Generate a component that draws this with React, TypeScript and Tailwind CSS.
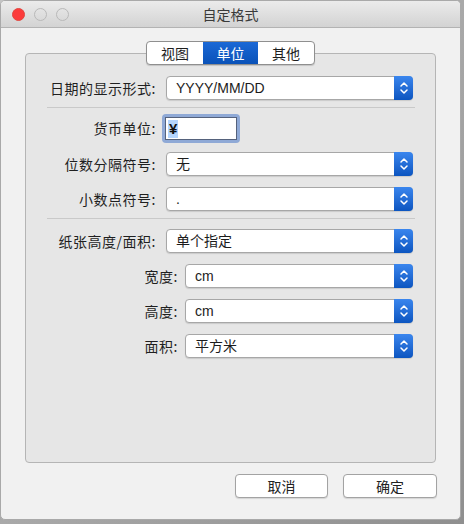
import React from "react";

const cjk = "font-['Noto_Sans_CJK_SC',sans-serif]";
const mixed = "font-['Liberation_Sans','Noto_Sans_CJK_SC',sans-serif]";

function Chevrons() {
    return (
        <svg width="10" height="16" viewBox="0 0 10 16" fill="none" stroke="white" strokeWidth="1.5" strokeLinecap="round" strokeLinejoin="round">
            <path d="M2 6 L5 3 L8 6" />
            <path d="M2 10 L5 13 L8 10" />
        </svg>
    );
}

function Popup({ value, width }: { value: string; width: string }) {
    return (
        <div className={`flex h-[24px] ${width} items-stretch rounded-[4px] border border-[#a7a7a7] bg-white shadow-[0_1px_1px_rgba(0,0,0,0.12)]`}>
            <div className={`flex-1 pl-[9px] text-[14px] leading-[22px] text-[#1c1c1c] ${mixed}`}>{value}</div>
            <div className="-my-px -mr-px flex w-[19px] items-center justify-center rounded-r-[4px] bg-gradient-to-b from-[#3a86ee] to-[#0b55c0]">
                <Chevrons />
            </div>
        </div>
    );
}

function Row({ label, labelW, children, className = "" }: { label: string; labelW: string; children: React.ReactNode; className?: string }) {
    return (
        <div className={`flex items-center ${className}`}>
            <div className={`${labelW} text-right text-[14px] tracking-[0.5px] text-[#1f1f1f] ${cjk}`}>{label}</div>
            {children}
        </div>
    );
}

function Separator({ className = "" }: { className?: string }) {
    return <div className={`h-px bg-[#c9c9c9] ${className}`} />;
}

export default function App() {
    return (
        <div className="h-[524px] w-[464px] bg-gradient-to-br from-[#c4c4c4] to-[#8f8f8f]">
            <div className="flex h-[520px] w-[461px] flex-col overflow-hidden rounded-[5px] border border-[#a9a9a9] bg-[#f1f1f1]">
                {/* title bar */}
                <div className="relative flex h-[27px] shrink-0 items-center justify-center border-b border-[#b3b3b3] bg-gradient-to-b from-[#ebebeb] to-[#d3d3d3]">
                    <div className="absolute left-[11px] top-[7px] flex gap-[9px]">
                        <div className="size-[13px] rounded-full border border-[#e2463f] bg-[#fc3b3b]" />
                        <div className="size-[13px] rounded-full border border-[#b9b9b9]" />
                        <div className="size-[13px] rounded-full border border-[#b9b9b9]" />
                    </div>
                    <div className={`text-[14px] text-[#3a3a3a] ${cjk}`}>自定格式</div>
                </div>

                {/* body */}
                <div className="flex flex-1 flex-col px-[24px] pt-[25px]">
                    <div className="relative h-[410px] rounded-[4px] border border-[#b5b5b5] bg-[#e6e6e6] pl-[21px] pr-[20px] pt-[22px]">
                        {/* tabs */}
                        <div className="absolute left-[120px] top-[-13px] flex h-[24px] overflow-hidden rounded-[4px] border border-[#8f8f8f] bg-white shadow-[0_1px_1px_rgba(0,0,0,0.15)]">
                            <div className={`flex w-[56px] items-center justify-center text-[14px] text-[#1e1e1e] ${cjk}`}>视图</div>
                            <div className={`flex w-[55px] items-center justify-center bg-gradient-to-b from-[#1a68d6] to-[#0a52b8] text-[14px] text-white ${cjk}`}>单位</div>
                            <div className={`flex w-[56px] items-center justify-center text-[14px] text-[#1e1e1e] ${cjk}`}>其他</div>
                        </div>

                        <Row label="日期的显示形式:" labelW="w-[109px]">
                            <div className="ml-[10px]">
                                <Popup value="YYYY/MM/DD" width="w-[247px]" />
                            </div>
                        </Row>
                        <Separator className="mt-[7px]" />

                        <Row label="货币单位:" labelW="w-[109px]" className="mt-[6px] h-[29px]">
                            <div className="ml-[6px] h-[29px] w-[78px] rounded-[4px] bg-[#8fa9d6] p-[3px]">
                                <div className="flex h-full w-full items-center border border-[#55627c] bg-white pl-[2px]">
                                    <span className={`bg-[#b4d5fe] px-px text-[15px] font-bold leading-[18px] text-[#111] ${mixed}`}>¥</span>
                                </div>
                            </div>
                        </Row>

                        <Row label="位数分隔符号:" labelW="w-[109px]" className="mt-[9px]">
                            <div className="ml-[10px]">
                                <Popup value="无" width="w-[247px]" />
                            </div>
                        </Row>

                        <Row label="小数点符号:" labelW="w-[109px]" className="mt-[11px]">
                            <div className="ml-[10px]">
                                <Popup value="." width="w-[247px]" />
                            </div>
                        </Row>
                        <Separator className="mt-[7px]" />

                        <Row label="纸张高度/面积:" labelW="w-[109px]" className="mt-[10px]">
                            <div className="ml-[10px]">
                                <Popup value="单个指定" width="w-[247px]" />
                            </div>
                        </Row>

                        <Row label="宽度:" labelW="w-[131px]" className="mt-[11px]">
                            <div className="ml-[7px]">
                                <Popup value="cm" width="w-[228px]" />
                            </div>
                        </Row>
                        <Row label="高度:" labelW="w-[131px]" className="mt-[11px]">
                            <div className="ml-[7px]">
                                <Popup value="cm" width="w-[228px]" />
                            </div>
                        </Row>
                        <Row label="面积:" labelW="w-[131px]" className="mt-[11px]">
                            <div className="ml-[7px]">
                                <Popup value="平方米" width="w-[228px]" />
                            </div>
                        </Row>
                    </div>

                    {/* buttons */}
                    <div className="mt-[11px] flex justify-end gap-[15px]">
                        <button className={`h-[24px] w-[93px] rounded-[4px] border border-[#a3a3a3] bg-white text-[14px] text-[#222] shadow-[0_1px_1px_rgba(0,0,0,0.12)] ${cjk}`}>取消</button>
                        <button className={`mr-[-1px] h-[24px] w-[94px] rounded-[4px] border border-[#a3a3a3] bg-white text-[14px] text-[#222] shadow-[0_1px_1px_rgba(0,0,0,0.12)] ${cjk}`}>确定</button>
                    </div>
                </div>
            </div>
        </div>
    );
}
